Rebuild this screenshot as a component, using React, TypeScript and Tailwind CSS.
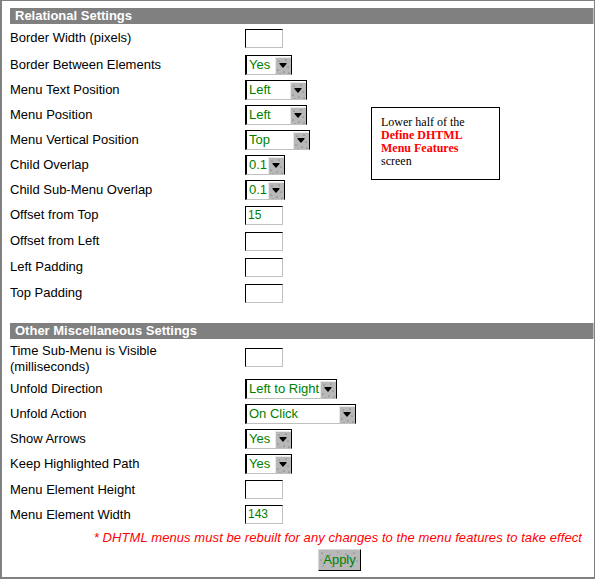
import React from "react";

const dots = (
  <>
    <circle cx="3" cy="3" r="0.6" fill="#555" />
    <circle cx="10" cy="2" r="0.6" fill="#555" />
    <circle cx="6" cy="6" r="0.6" fill="#555" />
    <circle cx="12" cy="9" r="0.6" fill="#555" />
    <circle cx="2" cy="12" r="0.6" fill="#555" />
    <circle cx="8" cy="14" r="0.6" fill="#555" />
    <circle cx="13" cy="15" r="0.6" fill="#555" />
    <circle cx="4" cy="16" r="0.6" fill="#555" />
  </>
);

function Sel({ cls, v }: { cls: string; v: string }) {
  return (
    <div className={`flex h-[20px] bg-white border-t border-l-2 border-r border-b border-t-black border-l-black border-r-black border-b-[#c0c0c0] ${cls}`}>
      <span className="flex-1 pl-[2px] text-[13px] leading-[18px] text-[#008000] whitespace-nowrap overflow-hidden">{v}</span>
      <div className="w-[16px] h-[17px] mt-[1px] bg-[#b8b8b8] border-l border-t border-[#e8e8e8]">
        <svg width="15" height="16" viewBox="0 0 15 16">
          {dots}
          <polygon points="3.5,6 10.5,6 7,10" fill="#000" />
          <rect x="3.5" y="5" width="7" height="1" fill="#000" />
        </svg>
      </div>
    </div>
  );
}

function Inp({ v }: { v?: string }) {
  return (
    <div className="w-[38px] h-[19px] bg-white border-t border-l border-t-black border-l-black border-r border-b border-r-[#c0c0c0] border-b-[#c0c0c0] pl-[2px] text-[12px] leading-[17px] text-[#008000]">
      {v ?? ""}
    </div>
  );
}

function Row({ h, label, children }: { h: string; label: React.ReactNode; children: React.ReactNode }) {
  return (
    <div className={`flex items-center ${h}`}>
      <div className="w-[235px] text-[13px] leading-[16px] text-black">{label}</div>
      <div>{children}</div>
    </div>
  );
}

function Header({ t }: { t: string }) {
  return (
    <div className="h-[16px] bg-[#808080] border-r border-[#c0c0c0] pl-[5px] text-[13px] font-bold leading-[16px] text-white">
      {t}
    </div>
  );
}

export default function App() {
  return (
    <div
      className="w-[595px] h-[579px] bg-white border-l-2 border-t border-r border-b-2 border-[#808080] pl-[8px] pt-[7px] overflow-hidden"
      style={{ fontFamily: '"Liberation Sans", Arial, sans-serif' }}
    >
      <Header t="Relational Settings" />
      <div className="flex items-start">
        <div className="w-[361px]">
          <Row h="h-[28px]" label="Border Width (pixels)"><Inp /></Row>
          <Row h="h-[25px]" label="Border Between Elements"><Sel cls="w-[47px]" v="Yes" /></Row>
          <Row h="h-[25px]" label="Menu Text Position"><Sel cls="w-[62px]" v="Left" /></Row>
          <Row h="h-[25px]" label="Menu Position"><Sel cls="w-[62px]" v="Left" /></Row>
          <Row h="h-[25px]" label="Menu Vertical Position"><Sel cls="w-[65px]" v="Top" /></Row>
          <Row h="h-[25px]" label="Child Overlap"><Sel cls="w-[40px]" v="0.1" /></Row>
          <Row h="h-[25px]" label="Child Sub-Menu Overlap"><Sel cls="w-[40px]" v="0.1" /></Row>
          <Row h="h-[26px]" label="Offset from Top"><Inp v="15" /></Row>
          <Row h="h-[26px]" label="Offset from Left"><Inp /></Row>
          <Row h="h-[26px]" label="Left Padding"><Inp /></Row>
          <Row h="h-[26px]" label="Top Padding"><Inp /></Row>
        </div>
        <div
          className="mt-[83px] w-[129px] h-[73px] border border-black pl-[9px] pt-[8px] text-[12px] leading-[13px] text-black"
          style={{ fontFamily: '"Liberation Serif", "Times New Roman", serif' }}
        >
          Lower half of the
          <br />
          <span className="font-bold text-[#ff0000]">Define DHTML</span>
          <br />
          <span className="font-bold text-[#ff0000]">Menu Features</span>
          <br />
          screen
        </div>
      </div>
      <div className="h-[17px]" />
      <Header t="Other Miscellaneous Settings" />
      <div className="flex items-start h-[38px]">
        <div className="w-[235px] pt-[4px] text-[13px] leading-[16px] text-black">
          Time Sub-Menu is Visible
          <br />
          (milliseconds)
        </div>
        <div className="pt-[9px]">
          <Inp />
        </div>
      </div>
      <Row h="h-[24px]" label="Unfold Direction"><Sel cls="w-[92px]" v="Left to Right" /></Row>
      <Row h="h-[25px]" label="Unfold Action"><Sel cls="w-[111px]" v="On Click" /></Row>
      <Row h="h-[25px]" label="Show Arrows"><Sel cls="w-[47px]" v="Yes" /></Row>
      <Row h="h-[26px]" label="Keep Highlighted Path"><Sel cls="w-[47px]" v="Yes" /></Row>
      <Row h="h-[25px]" label="Menu Element Height"><Inp /></Row>
      <Row h="h-[25px]" label="Menu Element Width"><Inp v="143" /></Row>
      <div className="mt-[3px] pr-[12px] text-right text-[13px] italic leading-[16px] tracking-[0.08px] text-[#ff0000]">
        * DHTML menus must be rebuilt for any changes to the menu features to take effect
      </div>
      <div className="pl-[308px] pt-[3px]">
        <div className="relative w-[43px] h-[22px] bg-[#b8b8b8] border-t border-l border-[#d8d8d8] border-r border-b border-r-black border-b-black flex items-center justify-center text-[13px] text-[#008000]">
          <svg className="absolute inset-0" width="41" height="20" viewBox="0 0 41 20">
            <circle cx="3" cy="3" r="0.6" fill="#666" />
            <circle cx="11" cy="5" r="0.6" fill="#666" />
            <circle cx="19" cy="2" r="0.6" fill="#666" />
            <circle cx="27" cy="4" r="0.6" fill="#666" />
            <circle cx="35" cy="3" r="0.6" fill="#666" />
            <circle cx="4" cy="16" r="0.6" fill="#666" />
            <circle cx="13" cy="17" r="0.6" fill="#666" />
            <circle cx="23" cy="16" r="0.6" fill="#666" />
            <circle cx="32" cy="17" r="0.6" fill="#666" />
            <circle cx="38" cy="11" r="0.6" fill="#666" />
            <circle cx="2" cy="10" r="0.6" fill="#666" />
          </svg>
          <span className="relative">Apply</span>
        </div>
      </div>
    </div>
  );
}
